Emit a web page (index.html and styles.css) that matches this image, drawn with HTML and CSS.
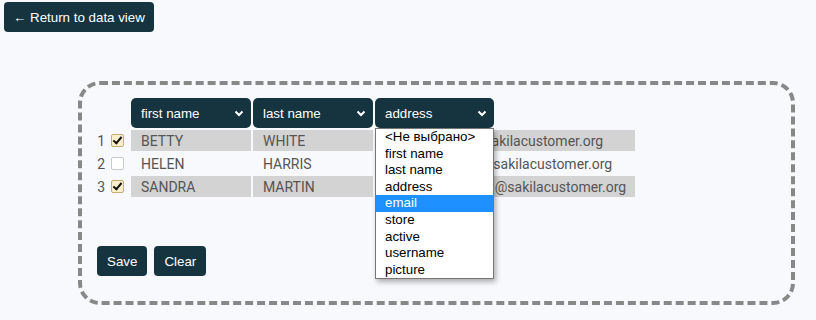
FILE: index.html
```html
<!DOCTYPE html>
<html lang="en">
<head>
  <meta charset="UTF-8">
  <meta name="viewport" content="width=device-width, initial-scale=1.0">
  <link rel="stylesheet" href="styles.css">
  <title>Column mapping</title>
</head>
<body>
  <div class="topbar">
    <button class="btn">&larr; Return to data view</button>
  </div>

  <div class="panel">
    <div class="grid">
      <div class="lead"></div>
      <div class="colhead">
        <span>first name</span>
        <svg width="10" height="7" viewBox="0 0 10 7"><path d="M1.5 1.5 L5 5 L8.5 1.5" fill="none" stroke="#fff" stroke-width="2"/></svg>
      </div>
      <div class="colhead">
        <span>last name</span>
        <svg width="10" height="7" viewBox="0 0 10 7"><path d="M1.5 1.5 L5 5 L8.5 1.5" fill="none" stroke="#fff" stroke-width="2"/></svg>
      </div>
      <div class="colhead open">
        <span>address</span>
        <svg width="10" height="7" viewBox="0 0 10 7"><path d="M1.5 1.5 L5 5 L8.5 1.5" fill="none" stroke="#fff" stroke-width="2"/></svg>
        <ul class="menu">
          <li>&lt;Не выбрано&gt;</li>
          <li>first name</li>
          <li>last name</li>
          <li>address</li>
          <li class="active">email</li>
          <li>store</li>
          <li>active</li>
          <li>username</li>
          <li>picture</li>
        </ul>
      </div>

      <div class="lead"><span>1</span><span class="check on"></span></div>
      <div class="cell shade">BETTY</div>
      <div class="cell shade">WHITE</div>
      <div class="cell shade">BETTY.WHITE@sakilacustomer.org</div>

      <div class="lead"><span>2</span><span class="check"></span></div>
      <div class="cell">HELEN</div>
      <div class="cell">HARRIS</div>
      <div class="cell">HELEN.HARRIS@sakilacustomer.org</div>

      <div class="lead"><span>3</span><span class="check on"></span></div>
      <div class="cell shade">SANDRA</div>
      <div class="cell shade">MARTIN</div>
      <div class="cell shade">SANDRA.MARTIN@sakilacustomer.org</div>
    </div>

    <div class="actions">
      <button class="btn">Save</button>
      <button class="btn">Clear</button>
    </div>
  </div>
</body>
</html>
```

FILE: styles.css
```css
body {
  margin: 0;
  background: #f8f9fc;
  font-family: Roboto, 'Liberation Sans', Arial, sans-serif;
  color: #555;
}
.topbar {
  padding: 2px 4px;
}
.btn {
  height: 30px;
  padding: 0 10px;
  background: #15343f;
  color: #fff;
  border: none;
  border-radius: 4px;
  font-family: 'Liberation Sans', Arial, sans-serif;
  font-size: 13.33px;
  cursor: pointer;
}
.topbar .btn {
  padding: 0 9px;
}
.panel {
  box-sizing: border-box;
  width: 717px;
  margin: 47px 0 0 78px;
  padding: 13px 15px 25px 15px;
  border: 4px dashed #888;
  border-radius: 22px;
}
.grid {
  display: grid;
  grid-template-columns: 32px 120px 120px 260px;
  grid-template-rows: 30px;
  grid-auto-rows: 21px;
  gap: 2px;
}
.lead {
  display: flex;
  align-items: center;
  justify-content: flex-end;
  gap: 6px;
  padding-right: 5px;
  font-size: 14px;
}
.check {
  box-sizing: border-box;
  width: 13px;
  height: 13px;
  border: 1px solid #c9c9c9;
  border-radius: 2px;
  background: #fff;
  position: relative;
}
.check.on {
  background: #fcefc9;
  border-color: #c7ab7a;
}
.check.on::after {
  content: '';
  position: absolute;
  left: 3px;
  top: 0px;
  width: 3px;
  height: 7px;
  border: solid #111;
  border-width: 0 2px 2px 0;
  transform: rotate(40deg);
}
.colhead {
  position: relative;
  display: flex;
  align-items: center;
  justify-content: space-between;
  padding: 0 7px 0 10px;
  background: #15343f;
  color: #fff;
  border-radius: 5px;
  font-family: 'Liberation Sans', Arial, sans-serif;
  font-size: 13.33px;
}
.colhead.open {
  width: 119px;
  box-sizing: border-box;
}
.cell {
  display: flex;
  align-items: center;
  padding: 0 10px;
  font-size: 14px;
  white-space: nowrap;
}
.shade {
  background: #d3d3d3;
}
.menu {
  position: absolute;
  left: 0;
  top: 30px;
  z-index: 2;
  box-sizing: border-box;
  width: 119px;
  margin: 0;
  padding: 0;
  list-style: none;
  background: #fff;
  border: 1px solid #767676;
  box-shadow: 2px 3px 5px rgba(0, 0, 0, 0.3);
  font-family: 'Liberation Sans', Arial, sans-serif;
  font-size: 13.33px;
  color: #000;
}
.menu li {
  height: 16.6px;
  line-height: 16.6px;
  padding-left: 9px;
}
.menu li.active {
  background: #1e90ff;
  color: #fff;
}
.actions {
  display: flex;
  gap: 7px;
  margin-top: 49px;
}
```
